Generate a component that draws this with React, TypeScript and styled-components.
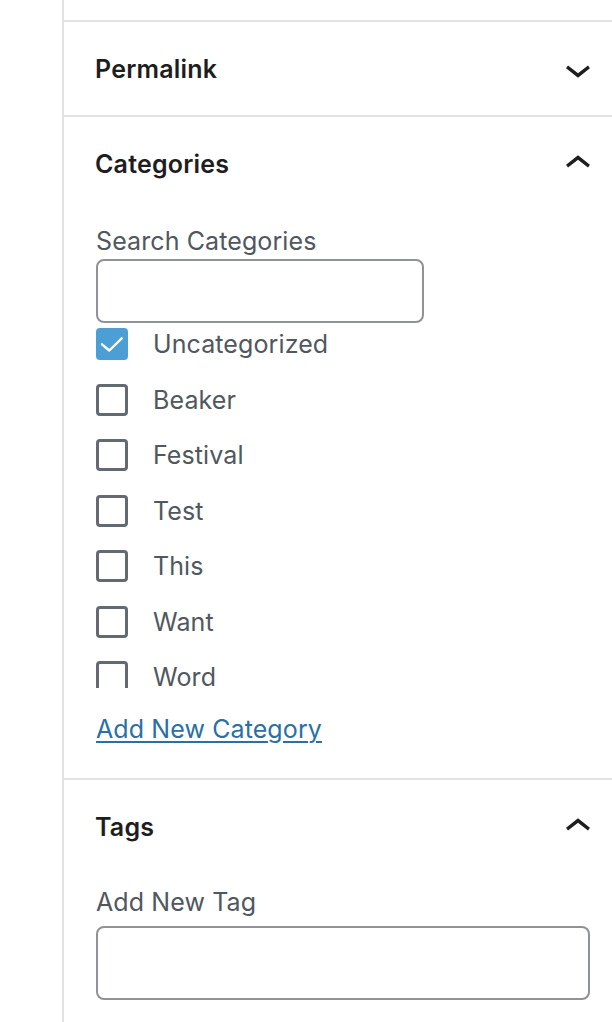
import React from "react";
import styled, { createGlobalStyle } from "styled-components";

const GlobalStyle = createGlobalStyle`
  html, body { margin: 0; padding: 0; background: #fff; }
  body { font-family: Inter, "Noto Sans", sans-serif; -webkit-font-smoothing: antialiased; }
  * { box-sizing: border-box; }
`;

const Sidebar = styled.div`
  margin-left: 62px;
  width: 550px;
  min-height: 1022px;
  border-left: 2px solid #e2e2e2;
  background: #fff;
`;

const TopStub = styled.div`
  height: 22px;
  border-bottom: 2px solid #e2e2e2;
`;

const Panel = styled.section`
  border-bottom: 2px solid #e2e2e2;
`;

const PanelHeader = styled.div`
  height: 93px;
  display: flex;
  align-items: center;
  justify-content: space-between;
  padding: 0 8px 0 31px;
`;

const PanelTitle = styled.h2`
  margin: 0;
  font-size: 25px;
  font-weight: 600;
  color: #1e1e1e;
  letter-spacing: 0.2px;
`;

const PanelBody = styled.div<{ $top: number }>`
  padding: ${(p) => p.$top}px 22px 32px 32px;
`;

const FieldLabel = styled.label<{ $gap: number }>`
  display: block;
  font-size: 25px;
  line-height: 34px;
  color: #50575e;
  letter-spacing: 0.1px;
  margin-bottom: ${(p) => p.$gap}px;
`;

const TextInput = styled.input<{ $w: number; $h: number }>`
  display: block;
  width: ${(p) => p.$w}px;
  height: ${(p) => p.$h}px;
  border: 2px solid #8f9296;
  border-radius: 8px;
  background: #fff;
  outline: none;
  padding: 0 16px;
  font-size: 25px;
  font-family: inherit;
`;

const CategoryList = styled.div`
  margin-top: 2px;
  height: 363px;
  overflow-y: auto;
  scrollbar-width: none;
  &::-webkit-scrollbar { display: none; }
`;

const CategoryRow = styled.label`
  display: flex;
  align-items: center;
  height: 38px;
  margin-bottom: 17.5px;
  gap: 25px;
`;

const Box = styled.span<{ $checked: boolean }>`
  width: 32px;
  height: 32px;
  flex: none;
  border-radius: 4px;
  background: ${(p) => (p.$checked ? "#4b9fd5" : "#fff")};
  border: ${(p) => (p.$checked ? "none" : "3px solid #646a71")};
  display: flex;
  align-items: center;
  justify-content: center;
`;

const CategoryName = styled.span`
  font-size: 25px;
  color: #50575e;
  line-height: 34px;
  letter-spacing: 0.1px;
`;

const AddLink = styled.a`
  display: inline-block;
  margin-top: 24px;
  font-size: 25px;
  line-height: 34px;
  color: #2a6fa6;
  letter-spacing: 0.1px;
  text-decoration: underline;
  text-underline-offset: 3px;
  text-decoration-thickness: 2px;
`;

const Chevron = ({ up }: { up?: boolean }) => (
  <svg width="52" height="52" viewBox="0 0 24 24" aria-hidden="true">
    {up ? (
      <path d="M6.5 12.4L12 8l5.5 4.4-.9 1.2L12 10l-4.6 3.6-.9-1.2z" fill="#1e1e1e" />
    ) : (
      <path d="M17.5 11.6L12 16l-5.5-4.4.9-1.2L12 14l4.6-3.6.9 1.2z" fill="#1e1e1e" />
    )}
  </svg>
);

const Check = () => (
  <svg width="32" height="32" viewBox="0 0 32 32" aria-hidden="true">
    <polyline
      points="6,16.3 13.3,22.5 25.7,10.3"
      fill="none"
      stroke="#fff"
      strokeWidth="2.4"
      strokeLinecap="round"
      strokeLinejoin="round"
    />
  </svg>
);

const categories = [
  { name: "Uncategorized", checked: true },
  { name: "Beaker", checked: false },
  { name: "Festival", checked: false },
  { name: "Test", checked: false },
  { name: "This", checked: false },
  { name: "Want", checked: false },
  { name: "Word", checked: false },
];

export default function App() {
  return (
    <>
      <GlobalStyle />
      <Sidebar>
        <TopStub />
        <Panel>
          <PanelHeader>
            <PanelTitle>Permalink</PanelTitle>
            <Chevron />
          </PanelHeader>
        </Panel>
        <Panel>
          <PanelHeader>
            <PanelTitle>Categories</PanelTitle>
            <Chevron up />
          </PanelHeader>
          <PanelBody $top={14}>
            <FieldLabel $gap={1}>Search Categories</FieldLabel>
            <TextInput $w={328} $h={64} />
            <CategoryList>
              {categories.map((c) => (
                <CategoryRow key={c.name}>
                  <Box $checked={c.checked}>{c.checked && <Check />}</Box>
                  <CategoryName>{c.name}</CategoryName>
                </CategoryRow>
              ))}
            </CategoryList>
            <AddLink href="#">Add New Category</AddLink>
          </PanelBody>
        </Panel>
        <Panel>
          <PanelHeader>
            <PanelTitle>Tags</PanelTitle>
            <Chevron up />
          </PanelHeader>
          <PanelBody $top={12}>
            <FieldLabel $gap={7}>Add New Tag</FieldLabel>
            <TextInput $w={494} $h={74} />
          </PanelBody>
        </Panel>
      </Sidebar>
    </>
  );
}
